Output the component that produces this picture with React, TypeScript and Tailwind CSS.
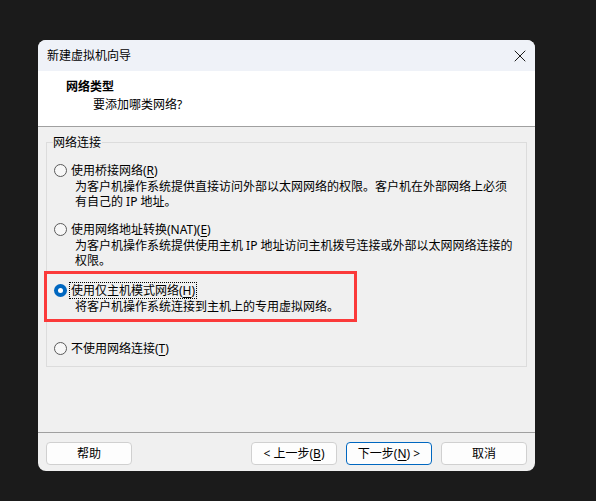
import { X } from 'lucide-react';

type Option = {
  label: string;
  hotkey: string;
  lines: string[];
  checked?: boolean;
  gap: string;
};

const OPTIONS: Option[] = [
  {
    label: '使用桥接网络(',
    hotkey: 'R',
    lines: ['为客户机操作系统提供直接访问外部以太网网络的权限。客户机在外部网络上必须', '有自己的 IP 地址。'],
    gap: 'mt-0',
  },
  {
    label: '使用网络地址转换(NAT)(',
    hotkey: 'E',
    lines: ['为客户机操作系统提供使用主机 IP 地址访问主机拨号连接或外部以太网网络连接的', '权限。'],
    gap: 'mt-[12px]',
  },
  {
    label: '使用仅主机模式网络(',
    hotkey: 'H',
    lines: ['将客户机操作系统连接到主机上的专用虚拟网络。'],
    checked: true,
    gap: 'mt-[14px]',
  },
  {
    label: '不使用网络连接(',
    hotkey: 'T',
    lines: [],
    gap: 'mt-[26px]',
  },
];

function Radio({ checked }: { checked?: boolean }) {
  if (checked) {
    return (
      <span className="flex h-[13px] w-[13px] shrink-0 items-center justify-center rounded-full bg-[#0067c0]">
        <span className="h-[5px] w-[5px] rounded-full bg-white" />
      </span>
    );
  }
  return <span className="h-[13px] w-[13px] shrink-0 rounded-full border border-[#5a5a5a] bg-[#f7f7f7]" />;
}

function Btn({ children, primary }: { children: React.ReactNode; primary?: boolean }) {
  return (
    <button
      className={`flex h-[23px] w-[86px] items-center justify-center rounded-[4px] border bg-[#fdfdfd] text-[12px] text-black ${
        primary ? 'border-[#0067c0]' : 'border-[#d0d0d0]'
      }`}
    >
      {children}
    </button>
  );
}

export default function App() {
  return (
    <div className="h-[501px] w-[596px] overflow-hidden bg-[#1b1b1b] pl-[38px] pt-[40px] font-['Noto_Sans','Noto_Sans_CJK_SC',sans-serif] text-[12px] leading-[15px] text-black">
      <div className="flex h-[431px] w-[497px] flex-col overflow-hidden rounded-[8px] bg-[#f0f0f0]">
        {/* title bar */}
        <div className="flex h-[31px] shrink-0 items-center justify-between bg-[#eff2f8] pl-[9px] pr-[5px]">
          <span>新建虚拟机向导</span>
          <X className="h-[20px] w-[20px] text-[#1a1a1a]" strokeWidth={1.2} />
        </div>

        {/* header */}
        <div className="h-[56px] shrink-0 border-b border-[#a0a0a0] bg-white pt-[8px]">
          <div className="pl-[28px] font-bold">网络类型</div>
          <div className="mt-[3px] pl-[55px]">要添加哪类网络?</div>
        </div>

        {/* body */}
        <div className="flex-1 px-[8px] pt-[15px]">
          <div className="relative border border-[#dcdcdc] pb-[9px] pt-[19px]">
            <span className="absolute -top-[8px] left-[6px] bg-[#f0f0f0] pr-[1px]">网络连接</span>

            {OPTIONS.map((o) => (
              <div key={o.hotkey} className={o.gap}>
                <div className="flex items-center pl-[7px]">
                  <Radio checked={o.checked} />
                  <span
                    className={`ml-[2px] px-[1px] ${
                      o.checked ? 'border border-dotted border-black' : 'border border-transparent'
                    }`}
                  >
                    {o.label}
                    <span className="underline underline-offset-2">{o.hotkey}</span>)
                  </span>
                </div>
                {o.lines.map((l) => (
                  <div key={l} className="pl-[28px]">
                    {l}
                  </div>
                ))}
              </div>
            ))}

            {/* annotation */}
            <div className="absolute left-[-3px] top-[128px] h-[51px] w-[313px] border-[3px] border-[#fb3a3a]" />
          </div>
        </div>

        {/* footer */}
        <div className="flex h-[39px] shrink-0 items-start border-t border-[#a0a0a0] px-[8px] pt-[9px]">
          <Btn>帮助</Btn>
          <div className="ml-auto flex gap-[9px]">
            <Btn>
              &lt; 上一步(<span className="underline underline-offset-2">B</span>)
            </Btn>
            <Btn primary>
              下一步(<span className="underline underline-offset-2">N</span>) &gt;
            </Btn>
            <Btn>取消</Btn>
          </div>
        </div>
      </div>
    </div>
  );
}
